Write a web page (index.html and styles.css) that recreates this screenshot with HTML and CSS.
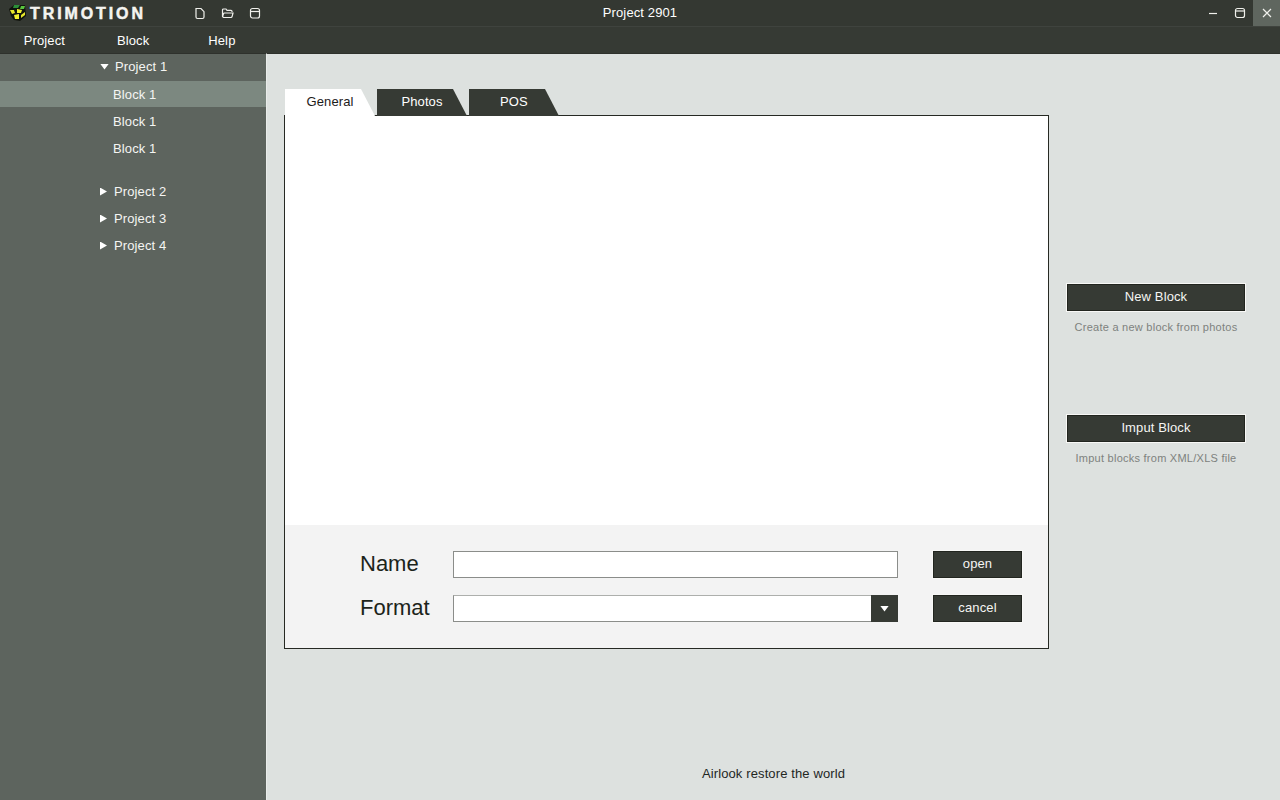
FILE: index.html
```html
<!DOCTYPE html>
<html lang="en">
<head>
<meta charset="utf-8">
<title>Trimotion</title>
<link rel="stylesheet" href="styles.css">
</head>
<body>
<div class="app">
  <header class="titlebar">
    <div class="brand">
      <svg class="logo" width="17" height="16" viewBox="0 0 17 16">
        <polygon points="0,4 5,0 16,0 17,11 11,16 5,15 2,11" fill="#10130c"/>
        <polygon points="5,0 11,0 9,3 4,3" fill="#2c8f38"/>
        <polygon points="12,1 16,1 15,4 11,4" fill="#59c43e"/>
        <polygon points="1,5 5,5 6,8 3,9" fill="#e6e62a"/>
        <polygon points="8,4 13,5 12,8 8,8" fill="#f2f02f"/>
        <polygon points="5,10 10,9 10,14 6,14" fill="#f2f02f"/>
        <polygon points="12,10 16,7 16,10 12,13" fill="#e6e62a"/>
      </svg>
      <span class="wordmark">TRIMOTION</span>
    </div>
    <div class="tools">
      <svg width="12" height="13" viewBox="0 0 12 13" class="icon"><path d="M2 1.500h5l3 3.200V10a1.500 1.500 0 0 1-1.500 1.500h-5A1.500 1.500 0 0 1 2 10z"/></svg>
      <svg width="13" height="12" viewBox="0 0 13 12" class="icon"><path d="M1.500 9V3a1 1 0 0 1 1-1h2.500l1 1.300h4a1 1 0 0 1 1 1v.7M2.500 10.500h7.500a1 1 0 0 0 1-.7l1-3.800H3.500a1 1 0 0 0-1 .8L1.500 9.500z"/></svg>
      <svg width="12" height="12" viewBox="0 0 12 12" class="icon"><rect x="1.500" y="1.500" width="9" height="9.500" rx="2"/><path d="M1.500 4.500h9"/></svg>
    </div>
    <div class="doc-title">Project 2901</div>
    <div class="win">
      <div class="win-btn"><svg width="10" height="10" viewBox="0 0 10 10" class="icon"><path d="M1 5.500h8"/></svg></div>
      <div class="win-btn"><svg width="12" height="12" viewBox="0 0 12 12" class="icon"><rect x="1.500" y="1.500" width="9" height="9" rx="2"/><path d="M1.500 4h9"/></svg></div>
      <div class="win-btn close"><svg width="10" height="10" viewBox="0 0 10 10" class="icon"><path d="M1 1l8 8M9 1l-8 8"/></svg></div>
    </div>
  </header>
  <nav class="menubar">
    <span class="menu-item">Project</span>
    <span class="menu-item">Block</span>
    <span class="menu-item">Help</span>
  </nav>
  <div class="body">
    <aside class="sidebar">
      <div class="row project open"><span class="tri-down"></span>Project 1</div>
      <div class="row block active">Block 1</div>
      <div class="row block">Block 1</div>
      <div class="row block last">Block 1</div>
      <div class="row project"><span class="tri-right"></span>Project 2</div>
      <div class="row project"><span class="tri-right"></span>Project 3</div>
      <div class="row project"><span class="tri-right"></span>Project 4</div>
    </aside>
    <main class="main">
      <div class="workspace">
        <section class="center">
          <div class="tabs">
            <div class="tab current">General</div>
            <div class="tab">Photos</div>
            <div class="tab">POS</div>
          </div>
          <div class="panel">
            <div class="canvas"></div>
            <div class="form">
              <div class="form-row">
                <label class="label">Name</label>
                <div class="field"></div>
                <button class="btn small">open</button>
              </div>
              <div class="form-row">
                <label class="label">Format</label>
                <div class="field select"><span class="caret"><span class="tri-down small-tri"></span></span></div>
                <button class="btn small">cancel</button>
              </div>
            </div>
          </div>
        </section>
        <section class="actions">
          <div class="action first">
            <button class="btn wide">New Block</button>
            <p class="hint">Create a new block from photos</p>
          </div>
          <div class="action">
            <button class="btn wide">Imput Block</button>
            <p class="hint">Imput blocks from XML/XLS file</p>
          </div>
        </section>
      </div>
      <footer class="footer">Airlook restore the world</footer>
    </main>
  </div>
</div>
</body>
</html>
```
FILE: styles.css
```css
* { box-sizing: border-box; }
html, body { margin: 0; height: 100%; }
body { font-family: "Liberation Sans", Arial, sans-serif; font-size: 13px; letter-spacing: .12px; color: #fff; background: #dde1df; overflow: hidden; }
.app { width: 1280px; height: 800px; display: flex; flex-direction: column; }

.titlebar { height: 27px; background: #343832; border-bottom: 1px solid #3f433e; display: flex; align-items: center; position: relative; flex: none; }
.brand { display: flex; align-items: center; width: 194px; padding-left: 9px; }
.logo { margin-right: 4px; flex: none; }
.wordmark { font-weight: 700; font-size: 16px; letter-spacing: 2.9px; padding-top: 2px; color: #f4f4f0; -webkit-text-stroke: .5px #f4f4f0; }
.tools { display: flex; gap: 15px; }
.icon { fill: none; stroke: #f0f0ec; stroke-width: 1.200; display: block; }
.doc-title { position: absolute; left: 0; right: 0; top: 5px; text-align: center; line-height: 16px; pointer-events: none; }
.win { margin-left: auto; display: flex; height: 26px; align-self: flex-start; }
.win-btn { width: 27px; height: 26px; display: flex; align-items: center; justify-content: center; }
.close { background: #5f665f; }

.menubar { height: 26px; background: #363a34; display: flex; align-items: center; flex: none; padding-top: 1px; }
.menu-item { width: 88.750px; line-height: 25px; text-align: center; }

.body { flex: 1; display: flex; min-height: 0; }
.sidebar { width: 267px; background: #5d645e; border-right: 1px solid #e9ecea; border-top: 1px solid #2e312c; flex: none; }
.row { height: 27px; display: flex; align-items: center; color: #f5f5f3; }
.project { padding-left: 100px; }
.project.open { padding-bottom: 2px; }
.block { padding-left: 113px; }
.active { height: 26px; margin-bottom: 1px; background: #7c8880; }
.last { margin-bottom: 16px; padding-bottom: 1px; }
.tri-down { width: 9px; height: 6px; background: #fff; clip-path: polygon(0 0, 100% 0, 50% 100%); margin-right: 6px; }
.tri-right { width: 7px; height: 8px; background: #fff; clip-path: polygon(0 0, 100% 50%, 0 100%); margin-right: 7px; }
.small-tri { margin: 0; }

.main { flex: 1; display: flex; flex-direction: column; border-top: 1px solid #2e312c; padding: 35px 0 18px 17px; }
.workspace { display: flex; align-items: flex-start; }
.center { width: 765px; }
.tabs { display: flex; gap: 2px; height: 26px; padding-left: 1px; }
.tab { width: 90px; height: 27px; text-align: center; line-height: 25px; background: #363a34; clip-path: polygon(0 0, 76px 0, 90px 100%, 0 100%); }
.tab.current { background: #fff; color: #1c201a; }
.panel { height: 534px; border: 1px solid #262923; background: #fff; display: flex; flex-direction: column; }
.canvas { flex: 1; }
.form { height: 123px; background: #f3f3f3; padding: 26px 26px 0 75px; display: flex; flex-direction: column; gap: 17px; }
.form-row { display: flex; align-items: center; height: 27px; }
.label { width: 93px; font-size: 22px; letter-spacing: 0; padding-bottom: 1px; color: #1c241a; }
.field { width: 445px; height: 27px; background: #fff; border: 1px solid #8b8d8a; }
.select { display: flex; justify-content: flex-end; border-top-color: #adafac; }
.caret { width: 27px; margin: -1px -1px -1px 0; background: #363a34; display: flex; align-items: center; justify-content: center; }
.btn { font: inherit; letter-spacing: inherit; color: #f5f5f3; background: #363a34; border: 1px solid #22251f; outline: 1px solid #f8f8f6; cursor: pointer; padding: 0 0 2px; }
.small { width: 89px; height: 27px; margin-left: 35px; }
.actions { width: 178px; margin-left: 18px; padding-top: 195px; }
.wide { width: 178px; height: 27px; display: block; }
.action { height: 131px; }
.hint { margin: 9px 0 0; text-align: center; font-size: 11px; line-height: 14px; letter-spacing: .25px; color: #7d827e; }
.footer { margin-top: auto; margin-left: -17px; text-align: center; color: #23271f; line-height: 16px; }
```
